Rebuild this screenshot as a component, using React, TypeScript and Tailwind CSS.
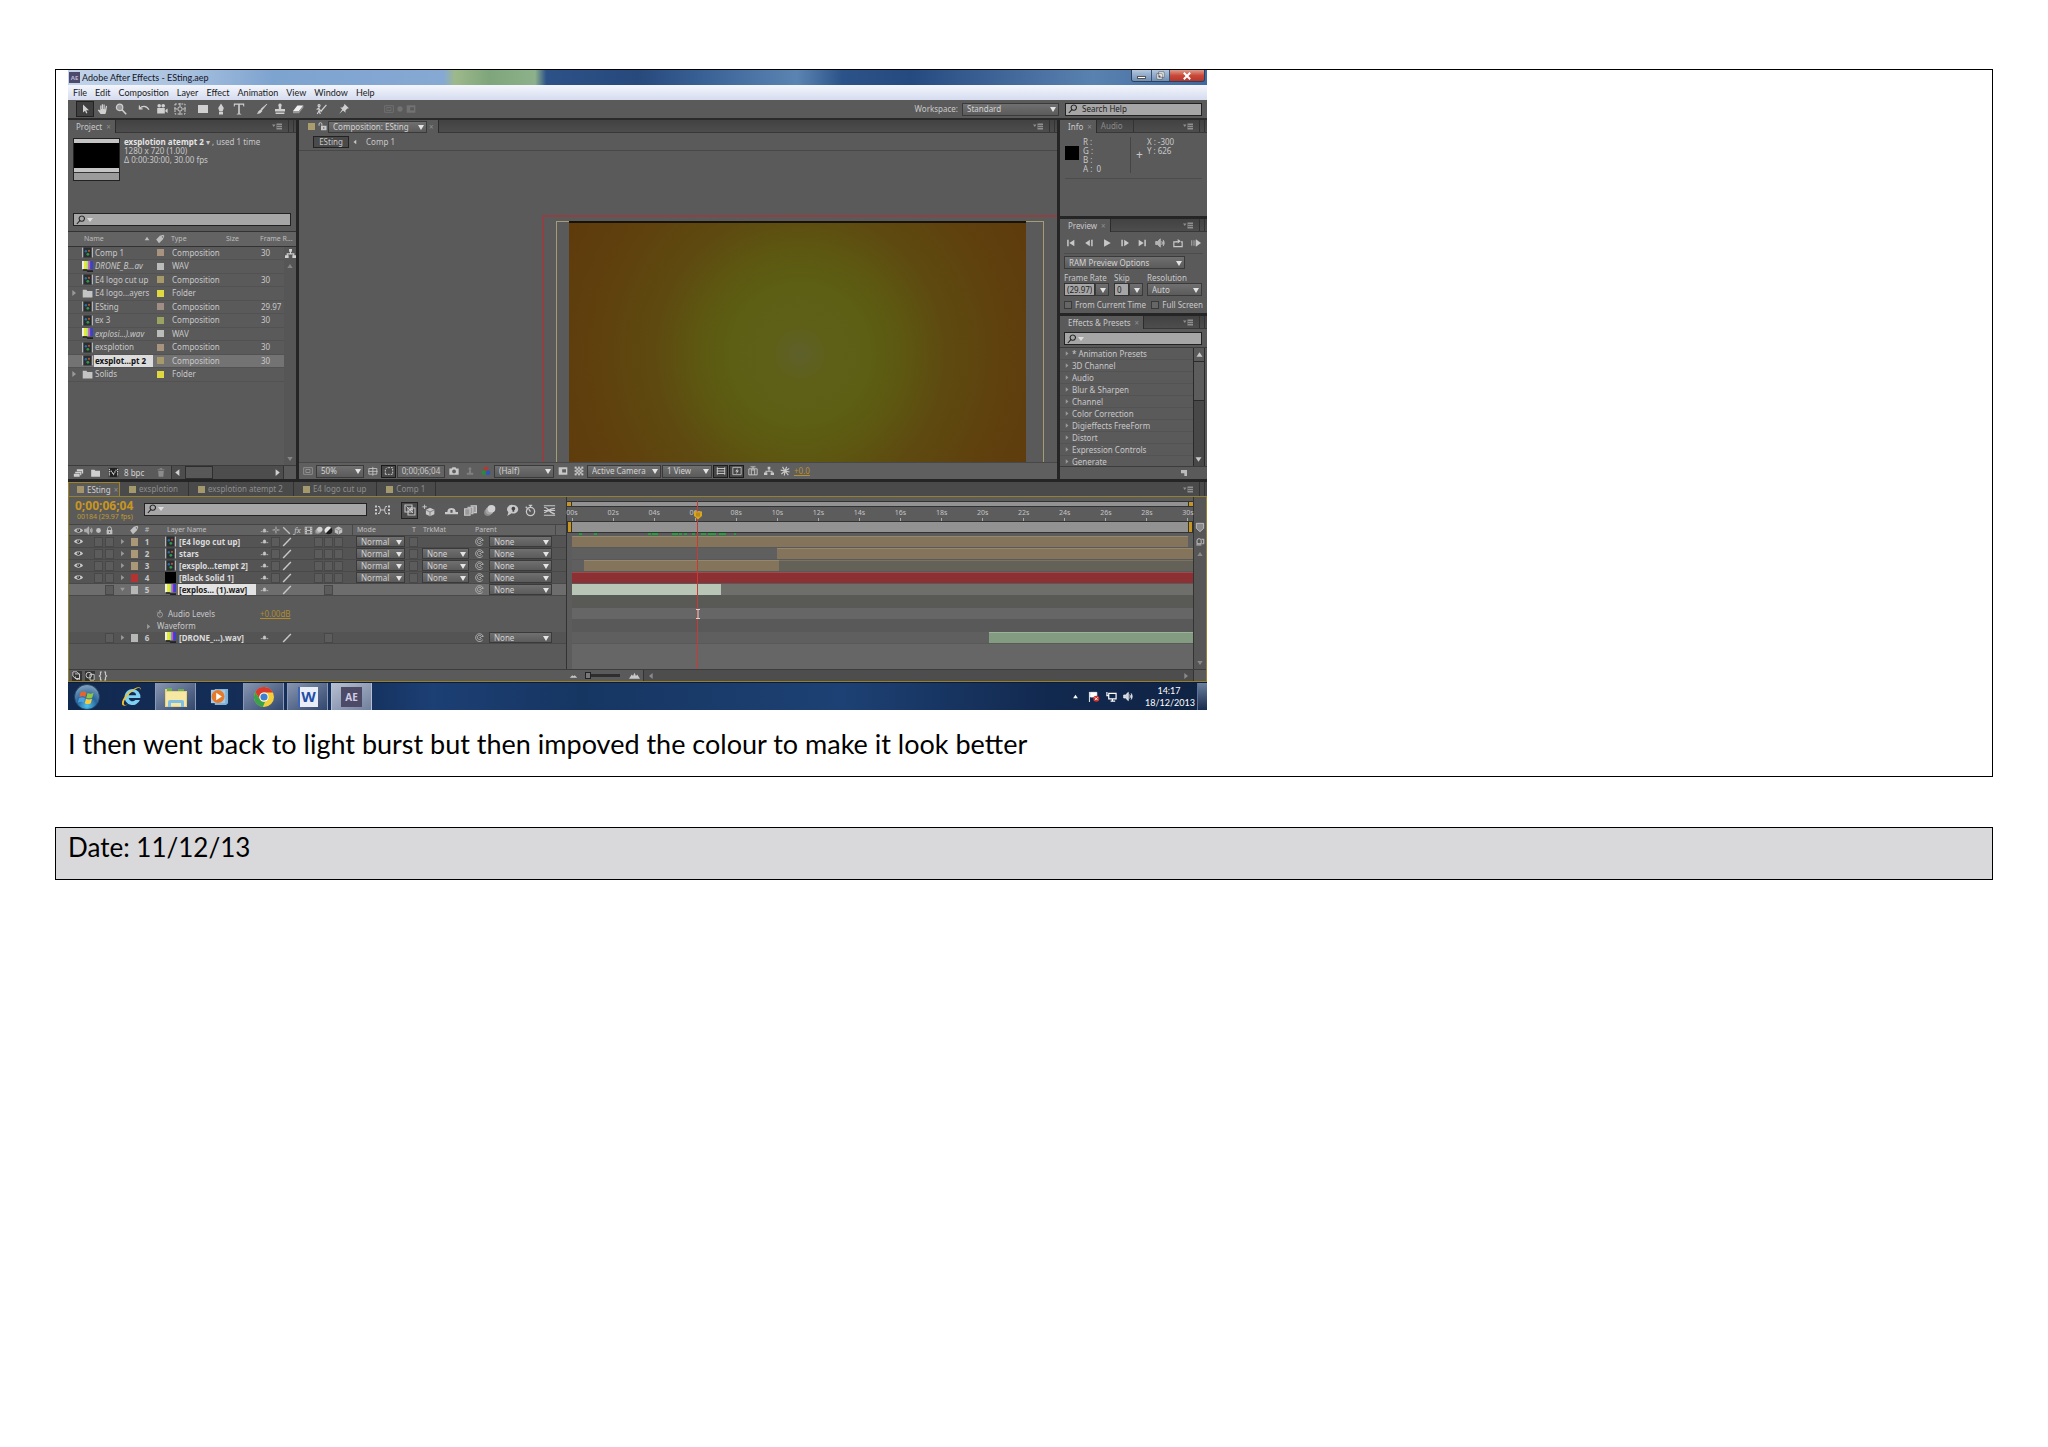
/**
 * Production diary page: one entry with the After Effects window and its
 * caption, followed by the date row of the next entry.
 */

import React from 'react';

/* ---------- icons (12 x 12 grid, currentColor unless noted) ---------- */

const ICONS: Record<string, React.ReactNode> = {
  arrow: <path d="M4 1.5v8l2-1.8 1.2 2.8 1.2-.6-1.2-2.6H10z" fill="currentColor" />,
  hand: (
    <path
      d="M3.6 11 .8 7.2l.9-.8 1.5 1.2V2.6h1.2V6h.4V1.2H6V6h.5V1.4h1.2v4.8h.5l.7-3.4 1.2.2-.9 5.400-.8 2.600z"
      fill="currentColor"
    />
  ),
  zoom: (
    <>
      <circle cx="4.6" cy="4.4" r="3.2" fill="#999" stroke="currentColor" strokeWidth="1.2" />
      <path d="M7 6.8 11.2 11.2" stroke="currentColor" strokeWidth="1.6" />
    </>
  ),
  rotate: <path d="M1.4 2.6v3.2h3.2M1.8 5.4C4 2.6 8.4 2.2 11 6.8" stroke="currentColor" fill="none" strokeWidth="1.2" />,
  camera: (
    <>
      <circle cx="3.2" cy="2.8" r="1.8" fill="currentColor" />
      <circle cx="7.2" cy="2.8" r="1.8" fill="currentColor" />
      <path d="M1.2 5h7.6v5.4H1.2zM9.4 7l2.2-1.4V10L9.400 8.600z" fill="currentColor" />
    </>
  ),
  pan: (
    <>
      <rect x="1" y="1" width="10" height="10" fill="none" stroke="currentColor" strokeDasharray="1.8 1.4" />
      <circle cx="6" cy="6" r="2.2" fill="none" stroke="currentColor" />
      <path d="M6 0v3M6 9v3M0 6h3M9 6h3" stroke="currentColor" />
    </>
  ),
  rect: <path d="M1 2h10v8H1z" fill="currentColor" />,
  pen: <path d="M6 .4 8.8 5 7.6 8.4H4.4L3.2 5zM4 9h4v2.4H4z" fill="currentColor" />,
  type: <path d="M.8.6h10.4v3h-.8l-.4-1.8H6.8v8.6l1.5.5v.5H3.7v-.5l1.5-.5V1.8H2l-.4 1.8H.8z" fill="currentColor" />,
  brush: <path d="M11 1 6 7 5 6zM5.4 6.6 6 8c-1 1.8-2.6 2.4-4.6 2.6 1-.8.8-3 4-4z" fill="currentColor" stroke="currentColor" strokeWidth=".7" />,
  stamp: <path d="M6 .6a1.9 1.9 0 0 1 1.2 3.2V6H11v2.4H1V6h3.8V3.8A1.9 1.9 0 0 1 6 .6zM1.6 9.6h8.8V11H1.6z" fill="currentColor" />,
  eraser: (
    <>
      <path d="M5.4 2.6h6L7 8H1z" fill="#f0f0f0" />
      <path d="M1 8h6v2.2H1zM7 8l4.4-5.4v2L7 10.2z" fill="#999" />
    </>
  ),
  roto: <path d="M4 1.6a1 1 0 1 0 .1 0zM4 4v4M4 5 1.6 6.4M4 8l-1.8 3M4 8l1.4 3M4.4 6.4 6 8M11.4 1.8 7 7M7.4 6.4 5.8 8.8" stroke="currentColor" fill="none" strokeWidth="1.2" />,
  pin: <path d="M6.400.8 11 5.200l-1.600.4-2 2 .2 2.200L5 7.400 1.200 11l3-4.400-2-2.200 2.200.2 1.800-2z" fill="currentColor" />,
  tag: <path d="M5.8 2.2 10 .8l1.2 1.6L9.4 6.6 4.8 11 1.4 6.6z M8.9 2.6a.8.8 0 1 0 .1 0z" fill="currentColor" fillRule="evenodd" />,
  flow: <path d="M4.4 1h3.2v3H6.6v1.8h3.6v2H12v3H8V7.8h1V7H3v.8h1v3H0v-3h1.8v-2h3.6V4h-1z" fill="currentColor" />,
  folder: <path d="M.8 2h4l1 1.2h5.6v7.2H.8z" fill="currentColor" />,
  stack: <path d="M4 1.6h7.6v5H10V3.8H4zM2 4.6h7.4v4H8V6.4H2zM.4 7h7v3.6h-7z" fill="currentColor" />,
  newcomp: (
    <>
      <path d="M.6 1h10.8v10H.6z" fill="#222" />
      <path d="M1.5 2v8M10.5 2v8M3 4l3 4 3-5" stroke="currentColor" fill="none" strokeDasharray="1.6 .8" strokeWidth="1.3" />
    </>
  ),
  trash: <path d="M1.8 2.4h8.4v1H1.8zM4.4 1h3.2v1.2H4.4zM2.6 4.2h6.8L8.8 11H3.2z" fill="currentColor" />,
  lock: (
    <>
      <path d="M3.4 5.4V3.6a2.6 2.6 0 0 1 5.2 0v1.8" fill="none" stroke="currentColor" strokeWidth="1.3" />
      <path d="M2.2 5.4h7.6v5.6H2.2zM5.3 7.2v2h1.4v-2z" fill="currentColor" fillRule="evenodd" />
    </>
  ),
  unlock: (
    <>
      <path d="M1.4 5V2.8a1.9 1.9 0 0 1 3.8 0v2" fill="none" stroke="currentColor" strokeWidth="1.3" />
      <path d="M4 5h7.4v6H4zM7 7v2h1.4V7z" fill="currentColor" fillRule="evenodd" />
    </>
  ),
  eye: (
    <>
      <path d="M0 6C2.2 2 9.8 2 12 6 9.8 9.8 2.2 9.8 0 6z" fill="currentColor" />
      <circle cx="6" cy="5.8" r="2.2" fill="#333" />
      <circle cx="5.5" cy="5.2" r=".8" fill="#fff" />
    </>
  ),
  speaker: <path d="M.8 4.2H3L6.4 1v10L3 7.8H.8zM8 3.6c1.2 1.4 1.2 3.4 0 4.8M9.6 2.2c2 2.2 2 5.4 0 7.6" fill="currentColor" stroke="currentColor" strokeWidth=".8" fillOpacity=".8" />,
  dot: <circle cx="6" cy="6" r="3.2" fill="currentColor" />,
  shy: <path d="M1 7.5h2.4M8.6 7.5H11M4.4 5.6a1.6 1.6 0 0 1 3.2 0V8H4.4z" stroke="currentColor" fill="currentColor" strokeWidth="1" />,
  sun: <path d="M6 .8v2.4M6 8.8v2.4M.8 6h2.4M8.8 6h2.4M6 3.6 8.4 6 6 8.4 3.6 6z" stroke="currentColor" fill="none" strokeWidth="1.3" />,
  slash: <path d="M10.6 1.2 1.4 10.8" stroke="currentColor" strokeWidth="1.7" />,
  backslash: <path d="M1.6 1.6 10.4 10.4" stroke="currentColor" strokeWidth="1.7" />,
  film: <path d="M1 1h10v10H1zM4 2v3.4h4V2zM4 6.6V10h4V6.6zM2 2.4v1.4h1V2.4zM2 5.4v1.4h1V5.4zM2 8.2v1.4h1V8.2zM9 2.4v1.4h1V2.4zM9 5.4v1.4h1V5.4zM9 8.2v1.4h1V8.2z" fill="currentColor" fillRule="evenodd" />,
  blur: (
    <>
      <ellipse cx="4.4" cy="7.8" rx="3.4" ry="3.2" fill="#888" />
      <ellipse cx="6" cy="6.2" rx="3.6" ry="3.4" fill="#a5a5a5" />
      <ellipse cx="7.8" cy="4.4" rx="3.6" ry="3.4" fill="#d0d0d0" />
    </>
  ),
  adjust: (
    <>
      <circle cx="6" cy="6" r="5" fill="#1c1c1c" />
      <path d="M2.4 9.6A5 5 0 0 1 9.6 2.4z" fill="#e6e6e6" />
    </>
  ),
  cube: (
    <>
      <path d="M6 .8 11 3.4v5.2L6 11.2 1 8.6V3.4z" fill="currentColor" />
      <path d="M1 3.4 6 6v5.2M6 6l5-2.6" stroke="#777" fill="none" strokeWidth=".9" />
    </>
  ),
  swirl: (
    <>
      <path d="M10.4 9A5.200 5.200 0 1 1 11 4.600" stroke="currentColor" fill="none" strokeWidth="1.1" />
      <path d="M8.600 7A2.800 2.800 0 1 1 8.600 4.800L11 4.600M6 6h2" stroke="currentColor" fill="none" strokeWidth="1.1" />
    </>
  ),
  stopwatch: (
    <>
      <circle cx="6" cy="7" r="3.8" fill="none" stroke="currentColor" strokeWidth="1.2" />
      <path d="M6 1v2.2M4.4 1.2h3.2M6 7 4.4 4.8M1.6 2.6l1.4 1.4" stroke="currentColor" strokeWidth="1.2" />
    </>
  ),
  first: <path d="M1.4 2h1.8v8H1.4zM10 2v8L4 6z" fill="currentColor" />,
  prev: <path d="M7 2v8L1.4 6zM8.6 2h1.8v8H8.6z" fill="currentColor" />,
  play: <path d="M2.5 1.5v9l8-4.5z" fill="currentColor" />,
  next: <path d="M1.6 2h1.8v8H1.6zM5 2v8l5.8-4z" fill="currentColor" />,
  last: <path d="M2 2v8l6-4zM8.8 2h1.8v8H8.8z" fill="currentColor" />,
  loop: (
    <>
      <path d="M4.5 4.6H1v5.8h10V4.6H9.5" stroke="currentColor" fill="none" strokeWidth="1.4" />
      <path d="M5.6 1.2v2.6H3.4v1.4h2.2v1.4L9.4 4z" fill="currentColor" />
    </>
  ),
  ram: (
    <>
      <path d="M0 2.6h1.2v6.8H0zM2 2.6h1.2v6.8H2zM4 2.6h1.2v6.8H4z" fill="#999" />
      <path d="M5.8 1.6v8.8L12 6z" fill="currentColor" />
    </>
  ),
  magnify: <path d="M7 1.2a3.2 3.2 0 1 1-.1 0M4.6 6.8 1 10.8" stroke="currentColor" fill="none" strokeWidth="1.3" />,
  preview: <path d="M.8 2h10.4v8H.8zM3.4 4.2h5v3.6h-5z" stroke="currentColor" fill="none" />,
  grid: <path d="M1 3h9.6v6.8H1zM5.8 1v10.6M0 6.4h11.6" stroke="currentColor" fill="none" />,
  mask: <path d="M1.6 10V4l2-2h6.8v8z" stroke="currentColor" fill="none" strokeDasharray="2.2 1.2" strokeWidth="1.2" />,
  snapshot: <path d="M.4 3h2.800l1-1.400h3.600l1 1.400h2.800v7.400H.4zM6 4.2a2.3 2.3 0 1 0 .1 0z" fill="currentColor" fillRule="evenodd" />,
  person: <path d="M6 1.4a1.8 1.8 0 1 1-.1 0zM4.8 5h2.4v3.2h2.6v2.2H2.2V8.2h2.6z" fill="currentColor" />,
  rgb: (
    <>
      <circle cx="6" cy="3.8" r="2.9" fill="#b23a2c" />
      <circle cx="3.6" cy="8" r="2.9" fill="#2b8a3c" />
      <circle cx="8.4" cy="8" r="2.9" fill="#2f55b8" />
    </>
  ),
  region: <path d="M.8 1.4h10.4v9.2H.8zM5 4h4.6v3.8H5z" fill="currentColor" fillRule="evenodd" />,
  checker: (
    <path
      d="M1 1h2v2H1zM5 1h2v2H5zM9 1h2v2H9zM3 3h2v2H3zM7 3h2v2H7zM1 5h2v2H1zM5 5h2v2H5zM9 5h2v2H9zM3 7h2v2H3zM7 7h2v2H7zM1 9h2v2H1zM5 9h2v2H5zM9 9h2v2H9z"
      fill="currentColor"
      stroke="currentColor"
      strokeWidth=".4"
    />
  ),
  align: <path d="M1.6 1.500v9M10.4 1.500v9M1 3h10M1 6h10M1 9h10" stroke="currentColor" fill="none" strokeWidth="1.1" />,
  fast: (
    <>
      <path d="M1 1.6h10v8.8H1z" fill="none" stroke="currentColor" />
      <path d="M7 2.4 3.8 6.6h2L5 9.8l3.4-4.4H6.2z" fill="currentColor" />
    </>
  ),
  timeline: <path d="M1 3.4h10v7.2H1zM4 3.4v7.2M8 3.4v7.2M3 1h6M6 1v5" stroke="currentColor" fill="none" strokeWidth="1.1" />,
  aperture: <path d="M6 6 3 1M6 6l5-3M6 6l4 5M6 6 1.6 9.6M6 6 .8 5M6 6 8 .8M6 6l5.4 1.2M6 6l-.8 5.4" stroke="currentColor" strokeWidth="1.4" />,
  draft: (
    <>
      <path d="M1 1h7v7H1zM4 4h7v7H4z" fill="none" stroke="currentColor" strokeWidth="1.1" />
      <path d="M2.5 2.5 9 9M8 3 4 8M5 5.5h4" stroke="currentColor" />
    </>
  ),
  cubeStar: (
    <>
      <path d="M7.4 3.4 11.4 5.4v4L7.4 11.4 3.6 9.4v-4z" fill="currentColor" />
      <path d="M2.4.6v4M.4 2.6h4" stroke="currentColor" strokeWidth=".9" />
      <path d="M3.6 5.4 7.4 7.4l4-2M7.4 7.4v4" stroke="#777" fill="none" strokeWidth=".8" />
    </>
  ),
  shyBig: <path d="M0 9.4h12v-2H9.8A3.8 3.8 0 0 0 2.2 7.4H0zM5 8V5.6h2V8z" fill="currentColor" fillRule="evenodd" />,
  frames: <path d="M.6 4.4h5v6h-5zM3.2 3h5v6H6.600M6 1.6h5.4V8H9" stroke="currentColor" fill="#999" strokeWidth="1.1" />,
  bulb: (
    <>
      <path d="M6.6 1a4.6 3.9 0 1 1-1.4 7.6L1.2 11l1-3.4A4.4 4 0 0 1 6.6 1z" fill="currentColor" />
      <path d="M6.8 2.6a1.7 1.7 0 0 1 .8 3.2v1.4H6V5.8a1.7 1.7 0 0 1 .8-3.2z" fill="#444" />
    </>
  ),
  graph: <path d="M.8 1.6h10.4M.8 10.4h10.4M1 3c4 0 5 6 10 6M1 8c3 0 4-4 10-4M.8 6h10.4" stroke="currentColor" fill="none" strokeWidth="1.1" />,
  marker: <path d="M1.6 1h8.8v6L6 11 1.6 7z" fill="#8a8a8a" stroke="#c8c8c8" />,
  compMark: <path d="M1 10.6h7M2 9V5a2.8 2.8 0 0 1 5.6 0v4zM8 3h3v6H9" stroke="currentColor" fill="none" strokeWidth="1.3" />,
  brackets: <path d="M4.6 1.2H3v3.4L1.6 6 3 7.4v3.4h1.6M7.4 1.2H9v3.4L10.4 6 9 7.4v3.4H7.4" stroke="currentColor" fill="none" strokeWidth="1.4" />,
  layers: <path d="M1 1h5l3 3v5H4L1 6zM3.5 3.5H9v7M4 6.5a2.5 2.5 0 0 0 5 2" stroke="currentColor" fill="none" strokeWidth="1.2" />,
  mountainSm: <path d="M1 9 4.4 5.6 6 7l1.6-1.4L11 9z" fill="currentColor" />,
  mountainLg: <path d="M0 9.6 3 5l1.4 1.6L6 3l1.6 3.6L9 5l3 4.6z" fill="currentColor" />,
  page: <path d="M1.5 1.5h9v9h-4v-4h-5z" fill="currentColor" />,
  overlap: (
    <>
      <circle cx="4.6" cy="5" r="3.4" fill="none" stroke="currentColor" strokeWidth="1.2" />
      <path d="M6 4h5v7H6z" fill="none" stroke="currentColor" strokeWidth="1.2" />
    </>
  ),
  up: <path d="M6 3 10 9H2z" fill="currentColor" />,
  down: <path d="M6 9 10 3H2z" fill="currentColor" />,
  left: <path d="M3 6l5.5-4.5v9z" fill="currentColor" />,
  right: <path d="M9 6 3.5 1.5v9z" fill="currentColor" />,
  // footage thumbnails
  comp: (
    <>
      <path d="M0 .5h12v11H0z" fill="#2a2e30" />
      <path d="M.7.5v11M11.3.5v11" stroke="#b4b4b4" strokeWidth="1.4" />
      <circle cx="4.2" cy="4.6" r="1.3" fill="#2b6ca3" />
      <circle cx="7.6" cy="4.2" r="1.2" fill="#b4532d" />
      <circle cx="6.4" cy="8" r="1.5" fill="#2f9a4b" />
    </>
  ),
  wav: (
    <>
      <path d="M0 0h3v9H0z" fill="#f1f1e2" />
      <path d="M2.4 0h3v9h-3z" fill="#e8ee25" />
      <path d="M5.2 0h2v9h-2z" fill="#9be09b" />
      <path d="M7.2 0h2v9h-2z" fill="#d34cd6" />
      <path d="M9 0h3v9H9z" fill="#3a42c9" />
      <path d="M1 9h4l1 1h6v2H6l-1-1.500H1z" fill="#222" />
    </>
  ),
  solid: <path d="M0 0h12v12H0z" fill="#000" />,
};

interface IconProps {
  name: string;
  className?: string;
}

const Icon: React.FC<IconProps> = ({ name, className = 'w-[10px] h-[10px]' }) => (
  <svg viewBox="0 0 12 12" className={`shrink-0 ${className}`} aria-hidden>
    {ICONS[name]}
  </svg>
);

/* ---------- small shared parts ---------- */

interface DropProps {
  label: string;
  value: string;
  className?: string;
}

const Drop: React.FC<DropProps> = ({ label, value, className = '' }) => (
  <span className={`relative flex shrink-0 ${className}`}>
    <select
      aria-label={label}
      className="w-full h-full appearance-none pl-1 border border-[#3a3a3a] bg-linear-to-b from-[#707070] to-[#5b5b5b] text-[#d2d2d2] outline-none"
    >
      <option>{value}</option>
    </select>
    <svg viewBox="0 0 6 5" className="absolute right-[3px] top-1/2 -mt-[2px] w-[6px] h-[5px]" aria-hidden>
      <path d="M0 0h6L3 5z" fill="#e4e4e4" />
    </svg>
  </span>
);

const PanelMenu: React.FC = () => (
  <div className="ml-auto flex items-center self-stretch">
    <button aria-label="Panel menu" className="text-[#aaa]">
      <svg viewBox="0 0 10 7" className="w-[10px] h-[7px]" aria-hidden>
        <path d="M0 1.5h3.5L1.75 4zM4.500.5H10v6H4.500z" fill="#8f8f8f" />
        <path d="M4.5 2.5H10M4.5 4.5H10" stroke="#5c5c5c" />
      </svg>
    </button>
    <span className="ml-[6px] w-[6px] self-stretch border-x border-[#333]" />
    <span className="w-[2px]" />
  </div>
);

const TabBar: React.FC<{ children: React.ReactNode }> = ({ children }) => (
  <div className="flex items-center h-[13px] shrink-0 bg-linear-to-b from-[#424242] to-[#4d4d4d] border-b border-[#383838]">
    {children}
  </div>
);

const Tab: React.FC<{ title: string }> = ({ title }) => (
  <div className="flex items-center self-stretch gap-1 pl-2 pr-1 -mb-px bg-[#5a5a5b] border-r border-[#2c2c2c] text-[#c9c9c9]">
    {title}
    <button aria-label={`Close ${title}`} className="text-[#8d8d8d]">×</button>
  </div>
);

interface SearchProps {
  label: string;
  placeholder?: string;
  className?: string;
  menu?: boolean;
}

const Search: React.FC<SearchProps> = ({ label, placeholder, className = '', menu = true }) => (
  <label className={`flex items-center h-[13px] shrink-0 pl-[2px] border border-[#222] bg-[#a6a6a6] text-[#222] ${className}`}>
    <Icon name="magnify" />
    {menu && (
      <svg viewBox="0 0 6 4" className="ml-px w-[6px] h-[4px]" aria-hidden>
        <path d="M0 0h6L3 4z" fill="#ddd" />
      </svg>
    )}
    <input
      aria-label={label}
      placeholder={placeholder}
      className="flex-1 min-w-0 pl-1 bg-transparent outline-none placeholder:text-[#222] placeholder:opacity-100"
    />
  </label>
);

/* ---------- title bar, menus, tools ---------- */

const MENUS = ['File', 'Edit', 'Composition', 'Layer', 'Effect', 'Animation', 'View', 'Window', 'Help'];

const TOOL_GROUPS = [
  ['arrow', 'hand', 'zoom'],
  ['rotate', 'camera', 'pan'],
  ['rect', 'pen', 'type'],
  ['brush', 'stamp', 'eraser'],
  ['roto'],
  ['pin'],
];

const TitleBar: React.FC = () => (
  <div className="flex items-start h-[15px] pl-px pr-[2px] bg-[linear-gradient(90deg,#c3d4ea_0%,#a9c2e0_10%,#7da3cf_18%,#86a9d3_33%,#9db98a_34%,#7fa57c_37%,#8db28b_41%,#2d5288_42%,#27497c_50%,#3a6296_56%,#5c84b2_64%,#2c5389_68%,#254a80_74%,#5a82b0_90%,#3f6a9f_100%)]">
    <span className="flex items-center justify-center mt-[2px] w-[11px] h-[11px] bg-[#4d4a6b] text-[#b9b5d8] text-[6px] leading-none font-bold">
      AE
    </span>
    <h1 className="ml-[2px] font-[Lato,sans-serif] text-[9px] leading-[15px] text-[#15151f]">
      Adobe After Effects - ESting.aep
    </h1>
    <div className="ml-auto flex h-[12px] rounded-b-[3px] border border-t-0 border-[#2e405c] overflow-hidden">
      <button aria-label="Minimize" className="flex items-center justify-center w-[20px] bg-linear-to-b from-[#b3c6dd] to-[#6f8fb5] border-r border-[#3c5272]">
        <span className="w-[9px] h-[3px] mt-1 bg-white border border-[#555]" />
      </button>
      <button aria-label="Restore" className="flex items-center justify-center w-[18px] bg-linear-to-b from-[#b3c6dd] to-[#6f8fb5] border-r border-[#3c5272]">
        <svg viewBox="0 0 10 10" className="w-[9px] h-[9px]" aria-hidden>
          <path d="M3 1h6v6H3zM1 3h6v6H1z" fill="#fff" stroke="#555" strokeWidth=".7" />
          <path d="M3 5h2v2H3z" fill="#555" />
        </svg>
      </button>
      <button aria-label="Close" className="flex items-center justify-center w-[34px] bg-linear-to-b from-[#dc9a8c] via-[#c9493a] to-[#b8352a]">
        <svg viewBox="0 0 10 10" className="w-[8px] h-[8px]" aria-hidden>
          <path d="M1 1l8 8M9 1 1 9" stroke="#fff" strokeWidth="2.5" />
        </svg>
      </button>
    </div>
  </div>
);

const MenuBar: React.FC = () => (
  <nav className="flex items-center gap-2 h-[15px] pl-[5px] bg-linear-to-b from-[#f4f6fc] to-[#d5dcef] font-[Lato,sans-serif] text-[9px] text-[#1a1a1a]">
    {MENUS.map((m) => (
      <button key={m}>{m}</button>
    ))}
  </nav>
);

const ToolBar: React.FC = () => (
  <div className="flex items-center h-[20px] pl-2 pr-[5px] bg-[#5a5a5a] border-b-2 border-[#2a2a2a] text-[#d0d0d0]">
    <div className="flex items-center gap-[5px] h-full">
      {TOOL_GROUPS.map((group) => (
        <div key={group[0]} className="flex">
          {group.map((tool) => (
            <button
              key={tool}
              aria-label={tool}
              className={`flex items-center justify-center w-[18px] h-[16px] ${
                tool === 'arrow' ? 'bg-[#3f3f3f] border border-[#222]' : ''
              }`}
            >
              <Icon name={tool} className="w-[12px] h-[12px]" />
            </button>
          ))}
        </div>
      ))}
      <div className="flex items-center gap-[1px] ml-[26px] text-[#727272]">
        <Icon name="preview" />
        <Icon name="dot" />
        <Icon name="region" />
      </div>
    </div>
    <span className="ml-auto mr-1 text-[#c8c8c8]">Workspace:</span>
    <Drop label="Workspace" value="Standard" className="w-[97px] h-[13px]" />
    <Search label="Search help" placeholder="Search Help" menu={false} className="ml-[6px] w-[137px]" />
  </div>
);

/* ---------- project panel ---------- */

interface ProjectItem {
  name: string;
  icon: string;
  swatch: string;
  type: string;
  rate?: string;
  selected?: boolean;
}

const PROJECT_ITEMS: ProjectItem[] = [
  { name: 'Comp 1', icon: 'comp', swatch: 'bg-[#a8947e]', type: 'Composition', rate: '30' },
  { name: 'DRONE_B...av', icon: 'wav', swatch: 'bg-[#b9bcb9]', type: 'WAV' },
  { name: 'E4 logo cut up', icon: 'comp', swatch: 'bg-[#a8996a]', type: 'Composition', rate: '30' },
  { name: 'E4 logo...ayers', icon: 'folder', swatch: 'bg-[#dfd83f]', type: 'Folder' },
  { name: 'ESting', icon: 'comp', swatch: 'bg-[#a08e86]', type: 'Composition', rate: '29.97' },
  { name: 'ex 3', icon: 'comp', swatch: 'bg-[#9ba363]', type: 'Composition', rate: '30' },
  { name: 'explosi...).wav', icon: 'wav', swatch: 'bg-[#b9bcb9]', type: 'WAV' },
  { name: 'exsplotion', icon: 'comp', swatch: 'bg-[#a8947e]', type: 'Composition', rate: '30' },
  { name: 'exsplot...pt 2', icon: 'comp', swatch: 'bg-[#a8996a]', type: 'Composition', rate: '30', selected: true },
  { name: 'Solids', icon: 'folder', swatch: 'bg-[#dfd83f]', type: 'Folder' },
];

const ProjectPanel: React.FC = () => (
  <section className="flex flex-col w-[228px] shrink-0 bg-[#5a5a5b]">
    <TabBar>
      <Tab title="Project" />
      <PanelMenu />
    </TabBar>

    <div className="flex h-[80px] pt-[5px] pl-[5px] gap-1">
      <div className="w-[47px] h-[43px] flex flex-col border border-[#222]">
        <span className="h-[4px] bg-[#c4c4c4]" />
        <span className="flex-1 bg-black" />
        <span className="h-[4px] bg-[#c4c4c4] border-b border-[#333] box-content" />
        <span className="h-[7px] bg-[#9b9b9b]" />
      </div>
      <div className="-mt-px leading-[9px] text-[#c8c8c8] whitespace-nowrap">
        <p>
          <b className="text-[#e4e4e4]">exsplotion atempt 2</b> ▾ , used 1 time
        </p>
        <p>1280 x 720 (1.00)</p>
        <p>Δ 0:00:30:00, 30.00 fps</p>
      </div>
    </div>

    <Search label="Search project" className="ml-[5px] mr-[5px]" />

    <div className="flex-1 flex mt-[5px] border-t border-[#333] min-h-0">
      <table className="self-start w-[216px] table-fixed border-collapse whitespace-nowrap text-[#c8c8c8]">
        <colgroup>
          <col className="w-[12px]" />
          <col className="w-[14px]" />
          <col className="w-[59px]" />
          <col className="w-[14px]" />
          <col className="w-[55px]" />
          <col className="w-[34px]" />
          <col className="w-[28px]" />
        </colgroup>
        <thead className="text-[7px] text-[#bdbdbd]">
          <tr className="h-[14px] bg-[#636363] border-b border-[#333] *:font-normal *:text-left *:p-0">
            <th colSpan={3}>
              <span className="flex items-center justify-between pl-4 pr-[2px]">
                Name <Icon name="up" className="w-[8px] h-[7px]" />
              </span>
            </th>
            <th>
              <Icon name="tag" className="mx-auto w-[10px] h-[10px]" />
            </th>
            <th>
              <span className="pl-[4px]">Type</span>
            </th>
            <th>
              <span className="pl-[4px]">Size</span>
            </th>
            <th>
              <span className="relative z-10 pl-[4px]">Frame R...</span>
            </th>
          </tr>
        </thead>
        <tbody>
          {PROJECT_ITEMS.map((item) => (
            <tr
              key={item.name}
              className={`odd:h-[13px] even:h-[14px] leading-[12px] border-b border-[#525253] *:p-0 ${item.selected ? 'bg-[#737374]' : ''}`}
            >
              <td>{item.icon === 'folder' && <Icon name="right" className="mx-auto w-[8px] h-[8px] text-[#999]" />}</td>
              <td>
                <Icon name={item.icon} className="mx-auto w-[11px] h-[11px] text-[#c4c4c4]" />
              </td>
              <td>
                <span
                  className={`block pl-px ${
                    item.selected ? 'bg-[#dcdcdc] text-[#111] font-bold' : item.icon === 'wav' ? 'italic' : ''
                  }`}
                >
                  {item.name}
                </span>
              </td>
              <td>
                <span className={`block mx-auto w-[7px] h-[7px] ${item.swatch}`} />
              </td>
              <td>
                <span className="pl-[5px]">{item.type}</span>
              </td>
              <td />
              <td>
                <span className="pl-[5px]">{item.rate}</span>
              </td>
            </tr>
          ))}
        </tbody>
      </table>
      <div className="flex-1 flex flex-col items-center pb-[2px] bg-[#565657] text-[#868686]">
        <span className="w-full h-[15px] bg-[#636363] border-b border-[#333]" />
        <Icon name="flow" className="mt-px w-[11px] h-[11px] text-[#d0d0d0]" />
        <Icon name="up" className="mt-[3px] w-[8px] h-[8px]" />
        <Icon name="down" className="mt-auto w-[8px] h-[8px]" />
      </div>
    </div>

    <div className="flex items-center h-[14px] pl-[5px] border-t border-[#3c3c3c] text-[#d0d0d0] whitespace-nowrap">
      <Icon name="stack" className="w-[11px] h-[10px]" />
      <Icon name="folder" className="ml-[6px] w-[11px] h-[10px]" />
      <Icon name="newcomp" className="ml-[7px] w-[11px] h-[11px]" />
      <span className="ml-[5px] w-[32px]">8 bpc</span>
      <Icon name="trash" className="w-[10px] h-[11px] text-[#8c8c8c]" />
      <div className="ml-[5px] flex-1 flex items-center self-stretch border-x border-[#333] bg-[#4d4d4d]">
        <Icon name="left" className="ml-px w-[9px] h-[9px]" />
        <span className="ml-[3px] w-[28px] self-stretch border border-[#2e2e2e] bg-[#585858]" />
        <Icon name="right" className="ml-auto mr-px w-[9px] h-[9px]" />
      </div>
      <span className="w-[12px]" />
    </div>
  </section>
);

/* ---------- composition viewer ---------- */

const BarIcon: React.FC<{ name: string; boxed?: boolean; className?: string }> = ({ name, boxed, className = '' }) => (
  <button
    aria-label={name}
    className={`flex items-center justify-center w-[15px] h-[13px] shrink-0 ${boxed ? 'bg-[#474747] border border-[#1c1c1c]' : ''} ${className}`}
  >
    <Icon name={name} />
  </button>
);

const CompositionPanel: React.FC = () => (
  <section className="flex flex-col flex-1 min-w-0 overflow-hidden bg-[#5a5a5b] text-[#c8c8c8]">
    <TabBar>
      <div className="flex items-center self-stretch -mb-px pl-[9px] pr-1 bg-[#5a5a5b] border-r border-[#2c2c2c]">
        <span className="w-[7px] h-[7px] bg-[#ab9d6d]" />
        <Icon name="unlock" className="ml-[3px] w-[9px] h-[9px]" />
        <Drop label="Composition" value="Composition: ESting" className="ml-px w-[99px] h-[12px]" />
        <button aria-label="Close composition" className="ml-[2px] text-[#8d8d8d]">×</button>
      </div>
      <PanelMenu />
    </TabBar>

    <div className="flex items-center h-[18px] shrink-0 pl-[14px] border-b border-[#484848]">
      <button className="w-[36px] h-[12px] flex items-center justify-center border border-[#222] bg-[#4a4a4a]">ESting</button>
      <Icon name="left" className="ml-[3px] w-[6px] h-[6px]" />
      <button className="ml-[8px]">Comp 1</button>
    </div>

    {/* Pasteboard: red layer bounds, pale composition frame, rendered image */}
    <div className="flex-1 min-h-0 pt-[64px] pl-[243px]">
      <div className="h-full pt-[4px] pl-[12px] border-t-2 border-l-2 border-[#8c4145]">
        <div className="flex w-[488px] h-full pl-[12px] border border-b-0 border-[#a59c74]">
          <div className="-mt-px w-[457px] border-t-2 border-[#191207] bg-[radial-gradient(circle_at_231px_131px,#5e602c_0px,#5e6018_28px,#5c5f14_70px,#5d5711_105px,#5e4a10_145px,#5f420e_195px,#5f3b0c_260px)]" />
        </div>
      </div>
    </div>

    <div className="flex items-center gap-px h-[17px] shrink-0 pl-px border-t border-[#484848] bg-[#5f5f5f]">
      <BarIcon name="preview" className="text-[#999]" />
      <Drop label="Magnification" value="50%" className="w-[48px] h-[13px]" />
      <BarIcon name="grid" />
      <BarIcon name="mask" boxed />
      <button className="w-[48px] h-[13px] border border-[#3c3c3c] bg-[#646464]">0;00;06;04</button>
      <BarIcon name="snapshot" />
      <BarIcon name="person" className="text-[#808080]" />
      <BarIcon name="rgb" />
      <Drop label="Resolution" value="(Half)" className="w-[60px] h-[13px]" />
      <BarIcon name="region" />
      <BarIcon name="checker" />
      <Drop label="3D view" value="Active Camera" className="w-[74px] h-[13px]" />
      <Drop label="View layout" value="1 View" className="w-[50px] h-[13px]" />
      <BarIcon name="align" boxed />
      <BarIcon name="fast" boxed />
      <BarIcon name="timeline" />
      <BarIcon name="flow" />
      <BarIcon name="aperture" />
      <a href="#exposure" className="ml-px text-[#b8912e] underline">+0.0</a>
    </div>
  </section>
);

/* ---------- right column ---------- */

const PRESETS = [
  '* Animation Presets',
  '3D Channel',
  'Audio',
  'Blur & Sharpen',
  'Channel',
  'Color Correction',
  'Digieffects FreeForm',
  'Distort',
  'Expression Controls',
  'Generate',
];

const TRANSPORT = ['first', 'prev', 'play', 'next', 'last', 'speaker', 'loop', 'ram'];

const InfoPanel: React.FC = () => (
  <section className="flex flex-col h-[96px] bg-[#5a5a5b] text-[#c8c8c8]">
    <TabBar>
      <Tab title="Info" />
      <button className="self-stretch pl-1 pr-[10px] border-r border-[#333] text-[#8a8a8a]">Audio</button>
      <PanelMenu />
    </TabBar>
    <div className="flex h-[46px] mx-[5px] pt-[4px] leading-[9px] border-b border-[#4c4c4c]">
      <span className="mt-[9px] w-[14px] h-[14px] bg-black" />
      <div className="ml-1 w-[48px] h-[36px] border-r border-[#454545] whitespace-nowrap">
        <p>R :</p>
        <p>G :</p>
        <p>B :</p>
        <p>A :&nbsp; 0</p>
      </div>
      <span className="ml-[5px] mt-[13px] text-[12px]">+</span>
      <div className="ml-1">
        <p>X : -300</p>
        <p>Y : 626</p>
      </div>
    </div>
  </section>
);

const PreviewPanel: React.FC = () => (
  <section className="flex flex-col h-[94px] bg-[#5a5a5b] text-[#c8c8c8]">
    <TabBar>
      <Tab title="Preview" />
      <PanelMenu />
    </TabBar>
    <div className="flex items-center justify-between h-[22px] shrink-0 mx-[4px] px-[2px] border-b border-[#4c4c4c]">
      {TRANSPORT.map((t) => (
        <button key={t} aria-label={t}>
          <Icon name={t} />
        </button>
      ))}
    </div>
    <div className="px-[4px] pt-[2px]">
      <Drop label="RAM preview options" value="RAM Preview Options" className="w-[121px] h-[13px]" />
      <div className="flex mt-[3px] leading-[11px] whitespace-nowrap">
        <label htmlFor="rate" className="w-[50px]">Frame Rate</label>
        <label htmlFor="skip" className="w-[33px]">Skip</label>
        <span>Resolution</span>
      </div>
      <div className="flex h-[13px]">
        <input id="rate" defaultValue="(29.97)" className="w-[31px] px-[2px] border border-[#333] bg-[#a6a6a6] text-[#222] outline-none" />
        <Drop label="Frame rate list" value="" className="w-[14px]" />
        <input id="skip" defaultValue="0" className="ml-[5px] w-[15px] px-[2px] border border-[#333] bg-[#a6a6a6] text-[#222] outline-none" />
        <Drop label="Skip list" value="" className="w-[14px]" />
        <Drop label="Resolution" value="Auto" className="ml-1 w-[55px]" />
      </div>
      <div className="flex items-center mt-[3px] leading-[11px] whitespace-nowrap">
        <input id="current" type="checkbox" className="appearance-none w-[8px] h-[8px] border border-[#3a3a3a] bg-[#666]" />
        <label htmlFor="current" className="ml-[3px]">From Current Time</label>
        <input id="full" type="checkbox" className="appearance-none ml-auto w-[8px] h-[8px] border border-[#3a3a3a] bg-[#666]" />
        <label htmlFor="full" className="ml-[3px]">Full Screen</label>
      </div>
    </div>
  </section>
);

const EffectsPanel: React.FC = () => (
  <section className="flex flex-col flex-1 min-h-0 bg-[#5a5a5b] text-[#c8c8c8]">
    <TabBar>
      <Tab title="Effects & Presets" />
      <PanelMenu />
    </TabBar>
    <Search label="Search effects" className="mt-[3px] ml-1 mr-[5px]" />
    <div className="flex flex-1 min-h-0 mt-[2px] border-y border-[#3c3c3c]">
      <ul className="flex-1 overflow-hidden">
        {PRESETS.map((p) => (
          <li key={p} className="flex items-center h-[12px] pl-1 gap-[2px] border-b border-[#535354]">
            <Icon name="right" className="w-[6px] h-[7px] text-[#999]" />
            {p}
          </li>
        ))}
      </ul>
      <div className="flex flex-col w-[12px] mr-[2px] border-x border-[#2a2a2a] bg-[#484848]">
        <span className="flex items-center justify-center h-[14px] border-b border-[#2a2a2a] bg-[#5a5a5b]">
          <Icon name="up" className="w-[9px] h-[9px]" />
        </span>
        <span className="h-[39px] border-b border-[#2a2a2a] bg-[#5c5c5c]" />
        <Icon name="down" className="mt-auto mb-[2px] w-[9px] h-[9px]" />
      </div>
    </div>
    <div className="flex items-center justify-end h-[12px] shrink-0 pr-[19px]">
      <Icon name="page" className="w-[8px] h-[8px] text-[#bbb]" />
    </div>
  </section>
);

/* ---------- timeline ---------- */

interface Bar {
  from: number; // % of the track width
  to: number;
  tone: string;
}

interface Layer {
  no: string;
  name: string;
  icon: string;
  swatch: string;
  visible?: boolean;
  mode?: boolean;
  matte?: boolean;
  selected?: boolean;
  bars: Bar[];
}

const TAN = 'bg-[#83745b] border-t border-[#94876f]';

const LAYERS: Layer[] = [
  { no: '1', name: '[E4 logo cut up]', icon: 'comp', swatch: 'bg-[#ab9878]', visible: true, mode: true, bars: [{ from: 0, to: 99.2, tone: TAN }] },
  { no: '2', name: 'stars', icon: 'comp', swatch: 'bg-[#ab9878]', visible: true, mode: true, matte: true, bars: [{ from: 33, to: 100, tone: TAN }] },
  {
    no: '3',
    name: '[exsplo...tempt 2]',
    icon: 'comp',
    swatch: 'bg-[#ab9878]',
    visible: true,
    mode: true,
    matte: true,
    bars: [
      { from: 2, to: 33.4, tone: TAN },
      { from: 33.4, to: 100, tone: 'bg-[#646258] border-t border-[#7a7263]' },
    ],
  },
  { no: '4', name: '[Black Solid 1]', icon: 'solid', swatch: 'bg-[#b53232]', visible: true, mode: true, matte: true, bars: [{ from: 0, to: 100, tone: 'bg-[#8c3034] border-t border-[#9c4c4c]' }] },
  {
    no: '5',
    name: '[explos... (1).wav]',
    icon: 'wav',
    swatch: 'bg-[#b5b8b5]',
    selected: true,
    bars: [
      { from: 0, to: 24, tone: 'bg-[#b7c6b5]' },
      { from: 24, to: 100, tone: 'bg-[#6e6f6a]' },
    ],
  },
];

const DRONE: Layer = {
  no: '6',
  name: '[DRONE_...).wav]',
  icon: 'wav',
  swatch: 'bg-[#b5b8b5]',
  bars: [{ from: 67.1, to: 100, tone: 'bg-[#829b81] border-t border-[#9cb39b]' }],
};

const TIMELINE_TABS = ['exsplotion', 'exsplotion atempt 2', 'E4 logo cut up', 'Comp 1'];

const SECONDS = ['00s', '02s', '04s', '06s', '08s', '10s', '12s', '14s', '16s', '18s', '20s', '22s', '24s', '26s', '28s', '30s'];

// cached frames, start and length in px from the track start
const CACHED = [
  [7, 3], [22, 3], [76, 3], [80, 6], [100, 6], [107, 3], [112, 3], [120, 3], [129, 5], [136, 8], [147, 7], [162, 2],
];

const Box: React.FC = () => <span className="w-[9px] h-[10px] border border-[#484848] bg-[#5c5c5c]" />;

const Cell: React.FC<{ w?: string; children?: React.ReactNode }> = ({ w = 'w-[10px]', children }) => (
  <span className={`flex items-center justify-center shrink-0 ${w}`}>{children}</span>
);

const LayerRow: React.FC<{ layer: Layer }> = ({ layer }) => (
  <div className={`flex items-center h-[12px] pl-1 border-b border-[#494949] ${layer.selected ? 'bg-[#6d6d6e]' : 'bg-[#545455]'}`}>
    <Cell>{layer.visible && <Icon name="eye" className="w-[9px] h-[9px]" />}</Cell>
    <Cell />
    <Cell w="w-[11px]">{layer.visible && <Box />}</Cell>
    <Cell w="w-[11px]"><Box /></Cell>
    <Cell w="w-[14px]">
      <Icon name={layer.selected ? 'down' : 'right'} className="w-[7px] h-[7px] text-[#999]" />
    </Cell>
    <Cell><span className={`w-[7px] h-[8px] ${layer.swatch}`} /></Cell>
    <Cell w="w-[16px]"><b>{layer.no}</b></Cell>
    <Cell w="w-[30px]"><Icon name={layer.icon} className="w-[11px] h-[11px]" /></Cell>
    <span className="w-[78px] shrink-0 -ml-[7px] mr-[3px] whitespace-nowrap">
      <b className={`pl-px ${layer.selected ? 'block bg-[#e2e2e2] text-[#222] leading-[11px]' : 'text-[#dcdcdc]'}`}>{layer.name}</b>
    </span>
    <Cell w="w-[11px]"><Icon name="shy" className="w-[9px] h-[9px]" /></Cell>
    <Cell w="w-[11px]">{layer.visible && <Box />}</Cell>
    <Cell w="w-[11px]"><Icon name="slash" className="w-[10px] h-[10px]" /></Cell>
    <Cell w="w-[11px]" />
    <Cell />
    <Cell>{layer.visible && <Box />}</Cell>
    <Cell><Box /></Cell>
    <Cell>{layer.visible && <Box />}</Cell>
    <span className="w-[13px] shrink-0" />
    <Cell w="w-[49px]">{layer.mode && <Drop label={`Mode of layer ${layer.no}`} value="Normal" className="w-full h-[11px]" />}</Cell>
    <Cell w="w-[17px]">{layer.mode && <Box />}</Cell>
    <Cell w="w-[47px]">{layer.matte && <Drop label={`Track matte of layer ${layer.no}`} value="None" className="w-full h-[11px]" />}</Cell>
    <Cell w="w-[20px]"><Icon name="swirl" className="w-[9px] h-[9px] text-[#bbb]" /></Cell>
    <Drop label={`Parent of layer ${layer.no}`} value="None" className="w-[63px] h-[11px]" />
  </div>
);

const TrackRow: React.FC<{ bars?: Bar[]; tone?: string }> = ({ bars = [], tone = 'bg-[#5f5f60]' }) => (
  <div className={`relative h-[12px] border-b border-[#595959] ${tone}`}>
    {bars.map((b) => (
      <span key={b.from} className={`absolute inset-y-0 ${b.tone}`} style={{ left: `${b.from}%`, width: `${b.to - b.from}%` }} />
    ))}
  </div>
);

const ColumnHeads: React.FC = () => (
  <div className="flex items-center h-[12px] pl-1 bg-[#626262] border-y border-[#444] text-[7px] text-[#c0c0c0]">
    <Cell><Icon name="eye" className="w-[9px] h-[9px]" /></Cell>
    <Cell><Icon name="speaker" className="w-[9px] h-[9px]" /></Cell>
    <Cell w="w-[11px]"><Icon name="dot" className="w-[9px] h-[9px]" /></Cell>
    <Cell w="w-[11px]"><Icon name="lock" className="w-[9px] h-[9px]" /></Cell>
    <Cell w="w-[14px]" />
    <Cell><Icon name="tag" className="w-[10px] h-[10px]" /></Cell>
    <Cell w="w-[16px]">#</Cell>
    <span className="w-[92px] shrink-0 ml-[12px]">Layer Name</span>
    <Cell w="w-[11px]"><Icon name="shy" className="w-[9px] h-[9px]" /></Cell>
    <Cell w="w-[11px]"><Icon name="sun" className="w-[8px] h-[8px]" /></Cell>
    <Cell w="w-[11px]"><Icon name="backslash" className="w-[9px] h-[9px]" /></Cell>
    <Cell w="w-[11px]"><i className="font-serif text-[9px] leading-[9px]">fx</i></Cell>
    <Cell><Icon name="film" className="w-[9px] h-[9px]" /></Cell>
    <Cell><Icon name="blur" className="w-[9px] h-[9px]" /></Cell>
    <Cell><Icon name="adjust" className="w-[9px] h-[9px]" /></Cell>
    <Cell><Icon name="cube" className="w-[9px] h-[9px]" /></Cell>
    <span className="w-[60px] shrink-0 ml-[9px] pl-1 border-l border-[#484848]">Mode</span>
    <span className="w-[11px] shrink-0">T</span>
    <span className="w-[52px] shrink-0">TrkMat</span>
    <span className="w-[81px] shrink-0 border-r border-[#484848]">Parent</span>
  </div>
);

const LayerPane: React.FC = () => (
  <div className="flex flex-col w-[498px] shrink-0 border-r border-[#333]">
    <div className="flex items-center h-[27px] pl-[6px]">
      <div className="w-[69px] text-[#c8961e] whitespace-nowrap">
        <p className="text-[12px] leading-[12px] font-bold">0;00;06;04</p>
        <p className="pl-[2px] text-[7px] leading-[9px] text-[#c09a30]">00184 (29.97 fps)</p>
      </div>
      <Search label="Search layers" className="w-[223px] -mt-[3px]" />
      <div className="flex items-center ml-[7px] -mt-px">
        <svg viewBox="0 0 18 12" className="w-[18px] h-[12px]" aria-hidden>
          <path d="M1 2.5h2M1 6h2M1 9.5h2M14 2.5h2M14 6h2M14 9.5h2" stroke="currentColor" strokeWidth="2" />
          <path d="M4 2.5h1.5l1 3.500h4l1-3.500H13M4 9.5h1.5l1-3.500M10.5 6l1 3.500H13" stroke="currentColor" fill="none" />
        </svg>
        <span className="ml-[9px] flex items-center justify-center w-[17px] h-[17px] border border-[#222] bg-[#4b4b4b]">
          <Icon name="draft" className="w-[12px] h-[12px]" />
        </span>
        <Icon name="cubeStar" className="ml-[4px] w-[13px] h-[13px]" />
        <Icon name="shyBig" className="ml-[10px] w-[13px] h-[13px]" />
        <Icon name="frames" className="ml-[6px] w-[13px] h-[13px]" />
        <Icon name="blur" className="ml-[6px] w-[13px] h-[13px]" />
        <Icon name="bulb" className="ml-[10px] w-[13px] h-[13px]" />
        <Icon name="stopwatch" className="ml-[5px] w-[13px] h-[13px]" />
        <Icon name="graph" className="ml-[6px] w-[13px] h-[13px]" />
      </div>
    </div>
    <ColumnHeads />
    {LAYERS.map((layer) => (
      <LayerRow key={layer.no} layer={layer} />
    ))}
    <div className="h-[12px]" />
    <div className="flex items-center h-[12px] pl-[87px]">
      <Icon name="stopwatch" className="w-[8px] h-[8px] text-[#aaa]" />
      <span className="w-[96px] pl-1">Audio Levels</span>
      <a href="#levels" className="text-[#b08a2c] underline">+0.00dB</a>
    </div>
    <div className="flex items-center gap-[5px] h-[12px] pl-[76px]">
      <Icon name="right" className="w-[7px] h-[7px] text-[#999]" />
      Waveform
    </div>
    <LayerRow layer={DRONE} />
  </div>
);

const TrackPane: React.FC = () => (
  <div className="relative flex-1 min-w-0 pl-[5px] bg-[#5c5c5d]">
    <div className="h-[10px] pt-[4px]">
      <div className="flex justify-between h-[6px] -ml-[5px] border-y border-[#333] bg-[#929292]">
        <span className="w-[5px] rounded-tl-[3px] bg-[#c8961e] border-r border-[#333]" />
        <span className="w-[5px] rounded-tr-[3px] bg-[#c8961e] border-l border-[#333]" />
      </div>
    </div>
    <div className="h-[14px] pt-px pr-[5px] text-[7px] leading-[10px] text-[#c4c4c4]">
      <ol className="flex justify-between -mx-[15px]">
        {SECONDS.map((s) => (
          <li key={s} className="w-[30px] flex flex-col items-center">
            {s}
            <span className="w-px h-[3px] bg-[#aaa]" />
          </li>
        ))}
      </ol>
    </div>
    <div className="flex justify-between h-[12px] -ml-[5px] border-y border-[#333] bg-[#929292]">
      <span className="w-[5px] bg-[#c8961e] border-x border-[#333]" />
      <span className="w-[5px] bg-[#c8961e] border-x border-[#333]" />
    </div>
    <svg className="block w-full h-[3px]" aria-hidden>
      {CACHED.map(([x, w]) => (
        <rect key={x} x={x} y="0" width={w} height="2" fill="#22a03c" />
      ))}
    </svg>
    {LAYERS.map((layer) => (
      <TrackRow key={layer.no} bars={layer.bars} />
    ))}
    <TrackRow tone="bg-[#595956]" />
    <TrackRow tone="bg-[#666667]" />
    <TrackRow tone="bg-[#59595a]" />
    <TrackRow bars={DRONE.bars} />
    <div className="h-[25px] bg-[#666667]" />

    {/* current time indicator and the text cursor resting on it */}
    <div className="absolute left-[125px] top-[4px] bottom-0 flex flex-col items-center w-[11px]">
      <span className="w-px flex-1 bg-[#c93a34]" />
      <svg viewBox="0 0 8 8" className="absolute top-[10px] w-[8px] h-[9px]" aria-hidden>
        <path d="M0 0h8v4.5L4 8 0 4.500z" fill="#d9a520" />
        <path d="M3 1v4M5 1v4" stroke="#8a6510" strokeWidth=".8" />
      </svg>
      <svg viewBox="0 0 6 10" className="absolute top-[108px] w-[6px] h-[10px]" aria-hidden>
        <path d="M1 .5h4M1 9.5h4M3 .5v9" stroke="#e6cfcf" fill="none" />
      </svg>
    </div>
  </div>
);

const Timeline: React.FC = () => (
  <section className="flex flex-col text-[#c8c8c8]">
    <div className="flex items-center h-[14px] bg-[#4a4a4a] text-[#8d8d8d]">
      <div className="flex items-center self-stretch w-[52px] pl-2 gap-[3px] bg-[#5a5a5b] border border-b-0 border-[#a0842c] text-[#d0d0d0]">
        <span className="w-[7px] h-[7px] bg-[#a3946c]" />
        ESting
        <button aria-label="Close ESting" className="text-[#8d8d8d]">×</button>
      </div>
      {TIMELINE_TABS.map((t) => (
        <button key={t} className="flex items-center self-stretch gap-[3px] pl-[9px] pr-[10px] border-r border-[#333]">
          <span className="w-[7px] h-[7px] bg-[#a3996c]" />
          {t}
        </button>
      ))}
      <PanelMenu />
    </div>

    <div className="border border-[#94802f] bg-[#5a5a5b]">
      <div className="flex">
        <LayerPane />
        <TrackPane />
        <div className="flex flex-col items-center w-[13px] pt-[25px] pb-[2px] border-l border-[#333] bg-[#565657] text-[#8a8a8a]">
          <Icon name="marker" className="w-[10px] h-[11px]" />
          <Icon name="compMark" className="mt-[4px] w-[10px] h-[9px] text-[#c4c4c4]" />
          <Icon name="up" className="mt-[4px] w-[8px] h-[8px]" />
          <Icon name="down" className="mt-auto w-[8px] h-[8px]" />
        </div>
      </div>
      <div className="flex items-center h-[12px] border-t border-[#3c3c3c]">
        <div className="flex items-center gap-[3px] w-[499px] pl-[3px]">
          <span className="bg-[#333]"><Icon name="layers" /></span>
          <span className="bg-[#333]"><Icon name="overlap" /></span>
          <Icon name="brackets" />
        </div>
        <Icon name="mountainSm" className="ml-px w-[9px] h-[9px]" />
        <input
          type="range"
          aria-label="Timeline zoom"
          defaultValue="0"
          className="ml-[7px] w-[35px] h-[8px] appearance-none bg-transparent [&::-webkit-slider-runnable-track]:h-[3px] [&::-webkit-slider-runnable-track]:bg-[#2e2e2e] [&::-webkit-slider-thumb]:appearance-none [&::-webkit-slider-thumb]:w-[6px] [&::-webkit-slider-thumb]:h-[7px] [&::-webkit-slider-thumb]:-mt-[2px] [&::-webkit-slider-thumb]:bg-[#777] [&::-webkit-slider-thumb]:border [&::-webkit-slider-thumb]:border-[#222]"
        />
        <Icon name="mountainLg" className="ml-[8px] w-[13px] h-[11px]" />
        <div className="flex-1 flex items-center justify-between self-stretch ml-[2px] mr-[12px] px-[3px] border-x border-[#333] bg-[#4d4d4d] text-[#8a8a8a]">
          <Icon name="left" className="w-[8px] h-[8px]" />
          <Icon name="right" className="w-[8px] h-[8px]" />
        </div>
      </div>
    </div>
  </section>
);

/* ---------- Windows taskbar ---------- */

const APP_TILE = 'border-x border-[#8c9ab5] bg-linear-to-br from-[#8795b0] to-[#33486f]';

const Taskbar: React.FC = () => (
  <footer className="flex items-center gap-[3px] h-[28px] border-t border-[#0d1b33] bg-[linear-gradient(90deg,#12294f_0%,#15315e_26%,#1c3f74_32%,#163662_45%,#1d4174_68%,#12294f_86%,#0f2344_100%)]">
    <button aria-label="Start" className="w-[37px] flex justify-center">
      <svg viewBox="0 0 26 26" className="w-[26px] h-[26px]" aria-hidden>
        <defs>
          <radialGradient id="orb" cx=".5" cy=".85" r=".8">
            <stop offset="0" stopColor="#4fc3ee" />
            <stop offset=".5" stopColor="#27659c" />
            <stop offset="1" stopColor="#7f9fba" />
          </radialGradient>
        </defs>
        <circle cx="13" cy="13" r="12.5" fill="url(#orb)" stroke="#1b3c5e" strokeWidth=".8" />
        <path d="M6.5 8.5c2-1.3 4-1.2 6 0l-1.2 4.6c-2-1.2-3.900-1.2-6 0z" fill="#e5632e" />
        <path d="M13.600 9c2 1.1 4 1.1 6-.2l-1.3 4.7c-2 1.2-4 1.1-6 0z" fill="#8fc744" />
        <path d="M5 14.2c2-1.2 4-1.2 6 0l-1.2 4.5c-2-1.2-4-1.1-6 .1z" fill="#4aa0e2" />
        <path d="M12 14.7c2 1.1 4 1.1 6 0l-1.2 4.5c-2 1.2-4 1.1-6 0z" fill="#f7cc3c" />
      </svg>
    </button>
    <button aria-label="Internet Explorer" className="ml-[3px] w-[41px] flex justify-center">
      <svg viewBox="0 0 24 24" className="w-[24px] h-[25px]" aria-hidden>
        <path d="M12.5 4.5a8 8 0 1 0 7.4 11h-4.6a3.8 3.8 0 0 1-6.6-1.9h11.7A8 8 0 0 0 12.5 4.500zM8.700 10.800a3.800 3.800 0 0 1 7.500 0z" fill="#7fd0f5" fillRule="evenodd" />
        <path d="M21 6c.6-3.6-2.4-4-6.5-2C8 7.2 1.5 14.5 2 19.2c.3 2.6 3.2 2.4 6 .8-2.6.8-4.4.6-4.2-1.6C4.2 14 12 5.6 17.400 3.800 20 3 21 4 21 6z" fill="#f2c32f" />
      </svg>
    </button>
    <button aria-label="Explorer" className={`w-[41px] h-full flex items-center justify-center ${APP_TILE}`}>
      <svg viewBox="0 0 24 22" className="w-[24px] h-[22px]" aria-hidden>
        <path d="M1 3h6l1 2h15v16H1z" fill="#e9d37c" />
        <path d="M2 6h20v14H2z" fill="#f6e7a2" />
        <path d="M3 2h5v3H3zM14 3h6v2h-6z" fill="#6cae5c" />
        <path d="M4 21v-5q0-2 2-2h12q2 0 2 2v5h-3v-4H7v4z" fill="#7fc0e4" />
      </svg>
    </button>
    <button aria-label="Media Player" className="w-[41px] flex justify-center">
      <svg viewBox="0 0 20 20" className="w-[19px] h-[19px]" aria-hidden>
        <path d="M5 2h14v15l-2 2H5z" fill="#7fb2da" />
        <path d="M1 3h15v14H1z" fill="#a9c9e2" />
        <circle cx="8.5" cy="10" r="6.8" fill="#e57a2a" />
        <path d="M6.5 6v8l6-4z" fill="#fff" />
      </svg>
    </button>
    <button aria-label="Chrome" className={`w-[41px] h-full flex items-center justify-center ${APP_TILE}`}>
      <svg viewBox="0 0 22 22" className="w-[22px] h-[22px]" aria-hidden>
        <circle cx="11" cy="11" r="10" fill="#f3cf3b" />
        <path d="M2.3 6A10 10 0 0 1 20 6.5h-9A5 5 0 0 0 6.500 13z" fill="#d93a2e" />
        <path d="M2.3 6 7 13.5a5 5 0 0 0 5 2.500l-2.200 5A10 10 0 0 1 2.300 6z" fill="#3da04c" />
        <circle cx="11" cy="11" r="4.6" fill="#fff" />
        <circle cx="11" cy="11" r="3.6" fill="#3f7fd0" />
      </svg>
    </button>
    <button aria-label="Word" className={`w-[41px] h-full flex items-center justify-center ${APP_TILE}`}>
      <span className="flex items-center justify-center w-[20px] h-[20px] bg-[#e9eef8] border-l-2 border-[#3c66b5] text-[#1f4fa8] text-[15px] leading-none font-bold">
        W
      </span>
    </button>
    <button aria-label="After Effects" className="w-[41px] h-full flex items-center justify-center border-x border-[#b6c0d2] bg-linear-to-br from-[#b7c0d2] to-[#71809d]">
      <span className="flex items-center justify-center w-[21px] h-[20px] bg-[#4c4a66] text-[#cfcce6] text-[10px] leading-none font-bold">
        AE
      </span>
    </button>

    <div className="ml-auto flex items-center h-full text-white">
      <Icon name="up" className="w-[9px] h-[7px]" />
      <svg viewBox="0 0 12 12" className="ml-[8px] w-[12px] h-[11px]" aria-hidden>
        <path d="M1 1v11M2 1.5h7v5H2z" fill="#fff" stroke="#fff" />
        <circle cx="8.5" cy="8.5" r="3.3" fill="#d3302c" />
        <path d="m7 7 3 3M10 7l-3 3" stroke="#fff" />
      </svg>
      <svg viewBox="0 0 12 12" className="ml-[6px] w-[11px] h-[11px]" aria-hidden>
        <path d="M3 2.5h8v6H3zM5 11h5M1 1v4h2M7 8v3" stroke="#fff" fill="none" strokeWidth="1.3" />
      </svg>
      <Icon name="speaker" className="ml-[6px] w-[10px] h-[11px]" />
      <time className="ml-[12px] w-[48px] text-center font-[Lato,sans-serif] text-[9px] leading-[12px]">
        14:17
        <br />
        18/12/2013
      </time>
      <button aria-label="Show desktop" className="ml-[4px] w-[10px] h-full border-l border-[#5d7397] bg-linear-to-b from-[#6c809f] to-[#1a2c4e]" />
    </div>
  </footer>
);

/* ---------- page ---------- */

const AfterEffectsWindow: React.FC = () => (
  <div className="w-full max-w-[1139px] bg-[#252525] font-['Noto_Sans',sans-serif] text-[8px] leading-[10px]">
    <TitleBar />
    <MenuBar />
    <ToolBar />
    <div className="flex gap-[3px] h-[359px]">
      <ProjectPanel />
      <CompositionPanel />
      <div className="flex flex-col gap-[3px] w-[147px] shrink-0">
        <InfoPanel />
        <PreviewPanel />
        <EffectsPanel />
      </div>
    </div>
    <div className="h-[3px]" />
    <Timeline />
    <Taskbar />
  </div>
);

export default function App() {
  return (
    <main className="min-h-screen bg-white px-[55px] pt-[69px] font-[Lato,sans-serif] text-[27px] leading-[32px] text-black">
      <section className="border border-black pl-3 pb-[16px]">
        <AfterEffectsWindow />
        <p className="mt-[18px]">I then went back to light burst but then impoved the colour to make it look better</p>
      </section>
      <section className="mt-[50px] h-[53px] pl-3 pt-[3px] border border-black bg-[#d9d9db]">
        <h2 className="text-[26px]">Date: 11/12/13</h2>
      </section>
    </main>
  );
}
